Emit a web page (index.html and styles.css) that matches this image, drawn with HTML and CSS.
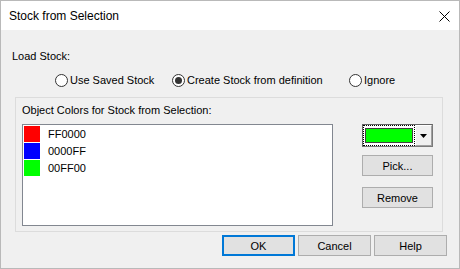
FILE: index.html
```html
<!DOCTYPE html>
<html lang="en">
<head>
  <meta charset="UTF-8">
  <title>Stock from Selection</title>
  <link rel="stylesheet" href="styles.css">
</head>
<body>

<div class="window">
  <!-- Title Bar -->
  <div class="titlebar">
    <span class="title">Stock from Selection</span>
    <svg class="close" width="11" height="11" viewBox="0 0 11 11">
      <path d="M0.5 0.5 L10.5 10.5 M10.5 0.5 L0.5 10.5" stroke="#000" stroke-width="1" fill="none"/>
    </svg>
  </div>

  <!-- Dialog Body -->
  <div class="body">
    <div class="section-label">Load Stock:</div>

    <div class="radio-row">
      <label class="radio-opt opt-1"><span class="radio"></span>Use Saved Stock</label>
      <label class="radio-opt opt-2"><span class="radio checked"></span>Create Stock from definition</label>
      <label class="radio-opt"><span class="radio"></span>Ignore</label>
    </div>

    <div class="group">
      <div class="group-label">Object Colors for Stock from Selection:</div>
      <div class="group-inner">
        <div class="color-list">
          <div class="color-item"><span class="swatch" style="background:#ff0000"></span>FF0000</div>
          <div class="color-item"><span class="swatch" style="background:#0000ff"></span>0000FF</div>
          <div class="color-item"><span class="swatch" style="background:#00ff00"></span>00FF00</div>
        </div>
        <div class="side-buttons">
          <div class="combo">
            <div class="combo-value"><span class="combo-swatch"></span></div>
            <div class="combo-arrow">
              <svg width="7" height="4" viewBox="0 0 7 4"><path d="M0 0 H7 L3.5 4 Z" fill="#000"/></svg>
            </div>
          </div>
          <button class="btn side-btn">Pick...</button>
          <button class="btn side-btn remove">Remove</button>
        </div>
      </div>
    </div>

    <div class="footer">
      <button class="btn default">OK</button>
      <button class="btn">Cancel</button>
      <button class="btn">Help</button>
    </div>
  </div>
</div>

</body>
</html>
```

FILE: styles.css
```css
body {
  margin: 0;
  padding: 0;
  font-family: "Liberation Sans", Arial, sans-serif;
  font-size: 11px;
  color: #000;
}
.window {
  width: 460px;
  height: 269px;
  box-sizing: border-box;
  border: 1px solid #b9b9b9;
  background: #f0f0f0;
  display: flex;
  flex-direction: column;
}
.titlebar {
  height: 29px;
  background: #fff;
  display: flex;
  align-items: center;
  justify-content: space-between;
  padding: 0 9px 0 8px;
}
.title {
  font-size: 12px;
  margin-top: 1px;
}
.close {
  display: block;
  margin-top: 1px;
}
.body {
  flex: 1;
  padding: 19px 11px 0 11px;
}
.section-label {
  line-height: 14px;
}
.radio-row {
  display: flex;
  margin: 11px 0 0 43px;
  height: 13px;
  line-height: 13px;
}
.radio-opt {
  display: flex;
  align-items: center;
}
.opt-1 {
  width: 117px;
}
.opt-2 {
  width: 177px;
}
.radio {
  width: 13px;
  height: 13px;
  box-sizing: border-box;
  border: 1px solid #333;
  border-radius: 50%;
  background: #fff;
  margin-right: 2px;
  display: flex;
  align-items: center;
  justify-content: center;
}
.radio.checked::after {
  content: "";
  width: 7px;
  height: 7px;
  border-radius: 50%;
  background: #333;
}
.group {
  margin: 10px 0 0 3px;
  width: 428px;
  height: 135px;
  box-sizing: border-box;
  border: 1px solid #dcdcdc;
  padding: 5px 0 0 6px;
}
.group-label {
  line-height: 14px;
}
.group-inner {
  display: flex;
  margin-top: 7px;
}
.color-list {
  width: 311px;
  height: 102px;
  box-sizing: border-box;
  border: 1px solid #828790;
  background: #fff;
  padding: 1px;
}
.color-item {
  display: flex;
  align-items: center;
  height: 16px;
  margin-bottom: 1px;
}
.swatch {
  width: 16px;
  height: 16px;
  margin-right: 8px;
}
.side-buttons {
  margin-left: 29px;
  width: 71px;
  display: flex;
  flex-direction: column;
}
.combo {
  height: 23px;
  box-sizing: border-box;
  border: 1px solid #7a7a7a;
  border-top-color: #646464;
  border-left-color: #646464;
  background: #fff;
  display: flex;
}
.combo-value {
  width: 52px;
  height: 21px;
  box-sizing: border-box;
  border: 1px dotted #000;
  padding: 2px 1px;
}
.combo-swatch {
  display: block;
  height: 15px;
  box-sizing: border-box;
  border: 1px solid #404040;
  background: #00ff00;
}
.combo-arrow {
  flex: 1;
  background: #f0f0f0;
  border-top: 1px solid #fff;
  border-left: 1px solid #fff;
  border-right: 1px solid #a0a0a0;
  border-bottom: 1px solid #a0a0a0;
  display: flex;
  align-items: center;
  justify-content: center;
}
.btn {
  font-family: "Liberation Sans", Arial, sans-serif;
  font-size: 11px;
  color: #000;
  background: #e1e1e1;
  border: 1px solid #adadad;
  padding: 0;
  height: 21px;
  width: 73px;
  box-sizing: border-box;
}
.side-btn {
  width: 71px;
  margin-top: 8px;
}
.side-btn.remove {
  margin-top: 11px;
}
.footer {
  display: flex;
  justify-content: flex-end;
  gap: 3px;
  margin-top: 3px;
  padding-right: 1px;
}
.btn.default {
  border: 2px solid #0078d7;
}
```
